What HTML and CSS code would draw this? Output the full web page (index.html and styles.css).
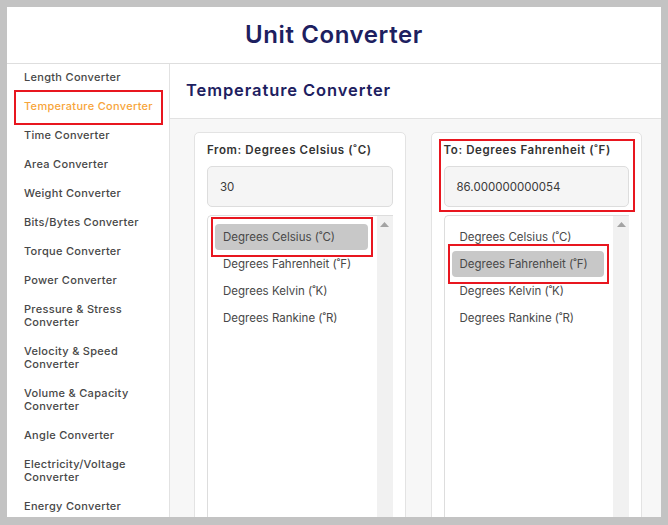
FILE: index.html
```html
<!DOCTYPE html>
<html lang="en">
<head>
  <meta charset="UTF-8">
  <title>Unit Converter</title>
  <link rel="stylesheet" href="styles.css">
</head>
<body>
<div id="app">
  <header class="topbar">
    <h1>Unit Converter</h1>
  </header>

  <div class="layout">
    <nav class="sidebar">
      <a class="nav-item">Length Converter</a>
      <a class="nav-item active mark">Temperature Converter</a>
      <a class="nav-item">Time Converter</a>
      <a class="nav-item">Area Converter</a>
      <a class="nav-item">Weight Converter</a>
      <a class="nav-item">Bits/Bytes Converter</a>
      <a class="nav-item">Torque Converter</a>
      <a class="nav-item">Power Converter</a>
      <a class="nav-item">Pressure &amp; Stress Converter</a>
      <a class="nav-item">Velocity &amp; Speed Converter</a>
      <a class="nav-item">Volume &amp; Capacity Converter</a>
      <a class="nav-item">Angle Converter</a>
      <a class="nav-item">Electricity/Voltage Converter</a>
      <a class="nav-item">Energy Converter</a>
    </nav>

    <main class="main">
      <div class="main-head">
        <h2>Temperature Converter</h2>
      </div>

      <div class="panels">
        <div class="card">
          <div class="field">
            <div class="label">From: Degrees Celsius (˚C)</div>
            <div class="input">30</div>
          </div>
          <div class="list">
            <div class="options">
              <div class="option selected mark mark-opt">Degrees Celsius (˚C)</div>
              <div class="option">Degrees Fahrenheit (˚F)</div>
              <div class="option">Degrees Kelvin (˚K)</div>
              <div class="option">Degrees Rankine (˚R)</div>
            </div>
            <div class="scrollbar">
              <svg width="9" height="5" viewBox="0 0 9 5"><path d="M0 5 L4.5 0 L9 5 Z" fill="#a3a3a3"/></svg>
            </div>
          </div>
        </div>

        <div class="card">
          <div class="field mark mark-field">
            <div class="label">To: Degrees Fahrenheit (˚F)</div>
            <div class="input">86.000000000054</div>
          </div>
          <div class="list">
            <div class="options">
              <div class="option">Degrees Celsius (˚C)</div>
              <div class="option selected mark mark-opt">Degrees Fahrenheit (˚F)</div>
              <div class="option">Degrees Kelvin (˚K)</div>
              <div class="option">Degrees Rankine (˚R)</div>
            </div>
            <div class="scrollbar">
              <svg width="9" height="5" viewBox="0 0 9 5"><path d="M0 5 L4.5 0 L9 5 Z" fill="#a3a3a3"/></svg>
            </div>
          </div>
        </div>
      </div>
    </main>
  </div>
</div>
</body>
</html>
```

FILE: styles.css
```css
html, body {
  margin: 0;
  padding: 0;
}

body {
  background-color: #c3c3c3;
  padding: 7px 7px 0 7px;
  font-family: Inter, "Noto Sans", sans-serif;
}

#app {
  background-color: #ffffff;
  height: 510px;
  overflow: hidden;
  display: flex;
  flex-direction: column;
}

.topbar {
  height: 56px;
  border-bottom: 1px solid #dedede;
  display: flex;
  align-items: center;
  justify-content: center;
}

.topbar h1 {
  margin: 0 0 2px 0;
  font-size: 24px;
  font-weight: 600;
  color: #1d2060;
  letter-spacing: 0.6px;
}

.layout {
  flex: 1;
  display: grid;
  grid-template-columns: 163px 1fr;
  min-height: 0;
}

/* sidebar */
.sidebar {
  border-right: 1px solid #e2e2e2;
  display: flex;
  flex-direction: column;
}

.nav-item {
  display: block;
  margin: 0 8px 0 9px;
  padding: 7px 0 9px 8px;
  font-size: 11px;
  line-height: 13px;
  font-weight: 500;
  color: #474747;
  letter-spacing: 0.3px;
}

.nav-item.active {
  color: #f7a53a;
}

/* red annotation boxes */
.mark {
  position: relative;
}

.mark::after {
  content: "";
  position: absolute;
  border: 2px solid #e8161f;
  top: -3px;
  bottom: -3px;
  left: -2px;
  right: -2px;
  pointer-events: none;
}

.mark-field::after {
  top: -4px;
  bottom: -5px;
  left: -5px;
  right: -6px;
}

.mark-opt::after {
  top: -7px;
  bottom: -7px;
  left: -4px;
  right: -5px;
}

/* main */
.main {
  display: flex;
  flex-direction: column;
  min-width: 0;
}

.main-head {
  height: 54px;
  border-bottom: 1px solid #e2e2e2;
  display: flex;
  align-items: center;
  padding-left: 16px;
}

.main-head h2 {
  margin: 0 0 2px 0;
  font-size: 16.5px;
  font-weight: 600;
  color: #1d2060;
  letter-spacing: 0.9px;
}

.panels {
  flex: 1;
  background-color: #f7f7f7;
  display: grid;
  grid-template-columns: 1fr 1fr;
  gap: 25px;
  padding: 13px 19px 0 24px;
}

.card {
  background-color: #ffffff;
  border: 1px solid #e3e3e3;
  border-radius: 5px;
  padding: 10px 12px 0 12px;
  height: 420px;
}

.label {
  font-size: 11.5px;
  line-height: 15px;
  font-weight: 600;
  color: #333333;
  letter-spacing: 0.6px;
}

.input {
  margin-top: 8px;
  height: 39px;
  background-color: #f5f5f5;
  border: 1px solid #dddddd;
  border-radius: 5px;
  padding-left: 12px;
  display: flex;
  align-items: center;
  font-size: 11.5px;
  color: #3a3a3a;
}

.list {
  margin-top: 8px;
  height: 330px;
  border: 1px solid #dddddd;
  border-right: none;
  border-bottom: none;
  border-radius: 5px 0 0 0;
  display: flex;
}

.options {
  flex: 1;
  padding: 8px 9px 0 7px;
}

.option {
  height: 26px;
  margin-bottom: 1px;
  padding-left: 8px;
  display: flex;
  align-items: center;
  font-size: 11.5px;
  color: #484848;
  border-radius: 4px;
}

.option.selected {
  background-color: #c8c8c8;
}

.scrollbar {
  width: 16px;
  background-color: #f1f1f1;
  display: flex;
  justify-content: center;
  padding-top: 6px;
}

.scrollbar svg {
  display: block;
}
```
